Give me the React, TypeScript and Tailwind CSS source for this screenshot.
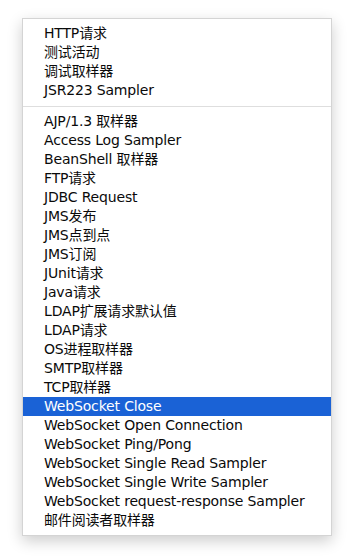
const topItems = ['HTTP请求', '测试活动', '调试取样器', 'JSR223 Sampler'];

const samplerItems = [
  'AJP/1.3 取样器',
  'Access Log Sampler',
  'BeanShell 取样器',
  'FTP请求',
  'JDBC Request',
  'JMS发布',
  'JMS点到点',
  'JMS订阅',
  'JUnit请求',
  'Java请求',
  'LDAP扩展请求默认值',
  'LDAP请求',
  'OS进程取样器',
  'SMTP取样器',
  'TCP取样器',
  'WebSocket Close',
  'WebSocket Open Connection',
  'WebSocket Ping/Pong',
  'WebSocket Single Read Sampler',
  'WebSocket Single Write Sampler',
  'WebSocket request-response Sampler',
  '邮件阅读者取样器',
];

function MenuItem({ label, active }: { label: string; active?: boolean }) {
  return (
    <div
      className={`h-[19px] flex items-center pl-[21px] whitespace-nowrap ${
        active ? 'bg-[#1a62d6] text-white' : 'text-[#0a0a0a]'
      }`}
    >
      {label}
    </div>
  );
}

export default function App() {
  return (
    <div className="min-h-[560px] w-[354px] bg-white pt-[18px] pl-[22px]">
      <div
        className="w-[310px] bg-white border border-[#d4d4d4] py-[5px] shadow-[0_5px_14px_rgba(0,0,0,0.2)] text-[14px] leading-[19px] tracking-[-0.17px]"
        style={{ fontFamily: '"DejaVu Sans", "Noto Sans CJK SC", sans-serif' }}
      >
        {topItems.map((item) => (
          <MenuItem key={item} label={item} />
        ))}
        <div className="h-[12px] flex items-center">
          <div className="h-px w-full bg-[#dedede]" />
        </div>
        {samplerItems.map((item) => (
          <MenuItem key={item} label={item} active={item === 'WebSocket Close'} />
        ))}
      </div>
    </div>
  );
}
